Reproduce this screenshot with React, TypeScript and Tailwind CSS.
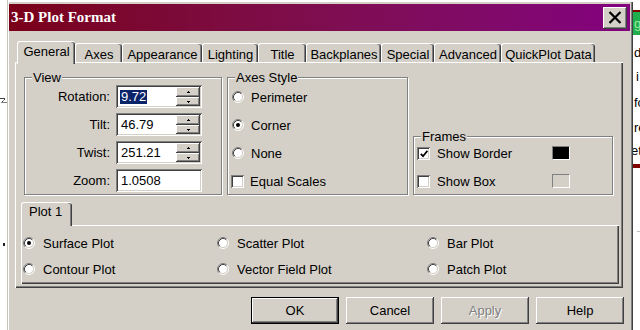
import React from "react";

const raised =
  "shadow-[inset_-1px_-1px_0_#404040,inset_1px_1px_0_#ffffff,inset_-2px_-2px_0_#808080,inset_2px_2px_0_#d4d0c8]";
const sunken =
  "shadow-[inset_1px_1px_0_#808080,inset_-1px_-1px_0_#ffffff,inset_2px_2px_0_#404040,inset_-2px_-2px_0_#d4d0c8]";

function Radio({ checked = false }: { checked?: boolean }) {
  return (
    <svg width="12" height="12" viewBox="0 0 12 12" className="shrink-0">
      <circle cx="6" cy="6" r="4.5" fill="#fff" />
      <path d="M2.11 9.89A5.5 5.5 0 0 1 9.89 2.11" stroke="#808080" fill="none" />
      <path d="M9.89 2.11A5.5 5.5 0 0 1 2.11 9.89" stroke="#fff" fill="none" />
      <path d="M2.82 9.18A4.5 4.5 0 0 1 9.18 2.82" stroke="#404040" fill="none" />
      <path d="M9.18 2.82A4.5 4.5 0 0 1 2.82 9.18" stroke="#d4d0c8" fill="none" />
      {checked && <circle cx="6" cy="6" r="2" fill="#000" />}
    </svg>
  );
}

function Check({ checked = false }: { checked?: boolean }) {
  return (
    <span className={`w-[13px] h-[13px] bg-white shrink-0 flex items-center justify-center ${sunken}`}>
      {checked && (
        <svg width="8" height="8" viewBox="0 0 8 8" className="mt-[1px]">
          <path d="M0.8 3.8 L3 6.2 L7.4 0.8" stroke="#000" strokeWidth="1.8" fill="none" />
        </svg>
      )}
    </span>
  );
}

function Arrow({ down = false }: { down?: boolean }) {
  return (
    <svg width="3" height="2" viewBox="0 0 3 2" shapeRendering="crispEdges">
      <rect x="1" y={down ? 1 : 0} width="1" height="1" />
      <rect x="0" y={down ? 0 : 1} width="3" height="1" />
    </svg>
  );
}

function Field({ value, selected = false, spin = true }: { value: string; selected?: boolean; spin?: boolean }) {
  return (
    <div className={`h-[23px] bg-white flex ${sunken}`}>
      <div className="flex-1 flex items-center pl-[4px]">
        {selected ? (
          <span className="bg-[#0a246a] text-white leading-[14px] pr-[1px] pl-[1px]">{value}</span>
        ) : (
          <span className="pl-[1px]">{value}</span>
        )}
      </div>
      {spin && (
        <div className="w-[24px] mr-[2px] my-[2px] flex flex-col">
          <div className={`h-[10px] bg-[#d4d0c8] flex items-center justify-center ${raised}`}>
            <Arrow />
          </div>
          <div className={`h-[9px] bg-[#d4d0c8] flex items-center justify-center ${raised}`}>
            <Arrow down />
          </div>
        </div>
      )}
    </div>
  );
}

function Group({ label, className, children }: { label: string; className: string; children: React.ReactNode }) {
  return (
    <div className={`relative border border-[#808080] shadow-[inset_1px_1px_0_#ffffff,1px_1px_0_#ffffff] ${className}`}>
      <span className="absolute left-[7px] -top-[8px] px-[1px] bg-[#d4d0c8] leading-[15px]">{label}</span>
      {children}
    </div>
  );
}

const tabs = [
  { name: "General", w: "w-[58px]" },
  { name: "Axes", w: "w-[47px]" },
  { name: "Appearance", w: "w-[80px]" },
  { name: "Lighting", w: "w-[56px]" },
  { name: "Title", w: "w-[48px]" },
  { name: "Backplanes", w: "w-[75px]" },
  { name: "Special", w: "w-[53px]" },
  { name: "Advanced", w: "w-[67px]" },
  { name: "QuickPlot Data", w: "w-[94px]" },
];

function Button({ label, def = false, disabled = false }: { label: string; def?: boolean; disabled?: boolean }) {
  return (
    <div
      className={`w-[88px] h-[27px] flex items-center justify-center bg-[#d4d0c8] ${raised} ${
        def ? "border border-black" : ""
      } ${disabled ? "text-[#808080] [text-shadow:1px_1px_0_#ffffff]" : ""}`}
    >
      {label}
    </div>
  );
}

export default function App() {
  return (
    <div className="w-[640px] h-[330px] bg-white flex overflow-hidden font-['Liberation_Sans',Arial,sans-serif] text-[13px] leading-[15px] text-black">
      {/* desktop behind, left */}
      <div className="w-[7px] shrink-0 flex flex-col">
        <svg width="7" height="6" viewBox="0 0 7 6" className="mt-[98px]" shapeRendering="crispEdges">
          <rect x="0" y="0" width="5" height="1" fill="#404040" />
          <rect x="4" y="1" width="1" height="1" fill="#404040" />
          <rect x="3" y="2" width="1" height="1" fill="#808080" />
          <rect x="2" y="3" width="1" height="1" fill="#404040" />
          <rect x="1" y="4" width="6" height="1" fill="#808080" />
        </svg>
        <span className="mt-[139px] ml-[3px] w-[2px] h-[3px] bg-[#202020]" />
      </div>

      {/* dialog */}
      <div className="w-[626px] shrink-0 h-full bg-[#d4d0c8] pt-[4px] pl-[2px] pr-[3px] flex flex-col shadow-[inset_1px_0_0_#c8c4bc,inset_2px_2px_0_#ffffff,inset_-1px_0_0_#404040,inset_-2px_0_0_#808080]">
        <div className="h-[27px] flex items-center pl-[2px] bg-gradient-to-r from-[#7a0018] to-[#83007f]">
          <span className="text-white font-bold text-[15px] font-['Liberation_Serif',serif]">3-D Plot Format</span>
          <div className={`ml-auto mr-[3px] w-[24px] h-[22px] bg-[#d4d0c8] flex items-center justify-center ${raised}`}>
            <svg width="14" height="13" viewBox="0 0 14 13">
              <path d="M1.5 1 L12.5 12 M12.5 1 L1.5 12" stroke="#000" strokeWidth="2.2" />
            </svg>
          </div>
        </div>

        <div className="ml-[6px] w-[608px] mt-[10px]">
          {/* tab strip */}
          <div className="h-[21px] flex items-end pl-[2px]">
            {tabs.map((t, i) =>
              i === 0 ? (
                <div
                  key={t.name}
                  className={`${t.w} h-[23px] -mb-[2px] relative z-10 bg-[#d4d0c8] rounded-t-[3px] border-t border-l border-white shadow-[inset_-1px_0_0_#404040,inset_-2px_0_0_#808080] pt-[2px] text-center`}
                >
                  {t.name}
                </div>
              ) : (
                <div
                  key={t.name}
                  className={`${t.w} h-[19px] rounded-t-[3px] border-t border-l border-white shadow-[inset_-1px_0_0_#404040,inset_-2px_0_0_#808080] pt-[3px] text-center`}
                >
                  {t.name}
                </div>
              )
            )}
          </div>

          {/* tab panel */}
          <div className="h-[226px] border-t border-l border-white shadow-[inset_-1px_-1px_0_#404040,inset_-2px_-2px_0_#808080] pt-[14px] pl-[8px]">
            <div className="flex items-start">
              <Group label="View" className="w-[198px] h-[118px]">
                <div className="grid grid-cols-[85px_86px] gap-x-[6px] gap-y-[5px] items-center pt-[7px]">
                  <span className="text-right">Rotation:</span>
                  <Field value="9.72" selected />
                  <span className="text-right">Tilt:</span>
                  <Field value="46.79" />
                  <span className="text-right">Twist:</span>
                  <Field value="251.21" />
                  <span className="text-right">Zoom:</span>
                  <Field value="1.0508" spin={false} />
                </div>
              </Group>

              <Group label="Axes Style" className="ml-[5px] w-[181px] h-[118px]">
                <div className="flex flex-col gap-[8px] pt-[9px] pl-[4px]">
                  <div className="h-[20px] flex items-center gap-[7px]">
                    <Radio />
                    <span>Perimeter</span>
                  </div>
                  <div className="h-[20px] flex items-center gap-[7px]">
                    <Radio checked />
                    <span>Corner</span>
                  </div>
                  <div className="h-[20px] flex items-center gap-[7px]">
                    <Radio />
                    <span>None</span>
                  </div>
                  <div className="h-[20px] flex items-center gap-[6px] -ml-[1px]">
                    <Check />
                    <span>Equal Scales</span>
                  </div>
                </div>
              </Group>

              <Group label="Frames" className="ml-[5px] mt-[59px] w-[200px] h-[59px]">
                <div className="flex flex-col gap-[8px] pt-[6px] pl-[3px]">
                  <div className="h-[20px] flex items-center">
                    <Check checked />
                    <span className="ml-[7px] w-[115px]">Show Border</span>
                    <span className="w-[18px] h-[14px] bg-black border border-t-[#808080] border-l-[#808080] border-b-white border-r-white" />
                  </div>
                  <div className="h-[20px] flex items-center">
                    <Check />
                    <span className="ml-[7px] w-[115px]">Show Box</span>
                    <span className="w-[18px] h-[14px] bg-[#d4d0c8] border border-t-[#808080] border-l-[#808080] border-b-white border-r-white" />
                  </div>
                </div>
              </Group>
            </div>

            {/* plot sub tabs */}
            <div className="mt-[7px] -ml-[3px]">
              <div className="h-[23px] flex items-end">
                <div className="w-[51px] h-[24px] -mb-[1px] relative z-10 bg-[#d4d0c8] rounded-t-[3px] border-t border-l border-white shadow-[inset_-1px_0_0_#404040,inset_-2px_0_0_#808080] pt-[1px] pl-[7px]">
                  Plot 1
                </div>
              </div>
              <div className="w-[598px] h-[59px] border-t border-l border-white shadow-[inset_-1px_-1px_0_#404040,inset_-2px_-2px_0_#808080] pt-[7px] pl-[1px]">
                <div className="grid grid-cols-[194px_210px_1fr] gap-y-[6px]">
                  <div className="h-[20px] flex items-center gap-[8px]">
                    <Radio checked />
                    <span>Surface Plot</span>
                  </div>
                  <div className="h-[20px] flex items-center gap-[8px]">
                    <Radio />
                    <span>Scatter Plot</span>
                  </div>
                  <div className="h-[20px] flex items-center gap-[8px]">
                    <Radio />
                    <span>Bar Plot</span>
                  </div>
                  <div className="h-[20px] flex items-center gap-[8px]">
                    <Radio />
                    <span>Contour Plot</span>
                  </div>
                  <div className="h-[20px] flex items-center gap-[8px]">
                    <Radio />
                    <span>Vector Field Plot</span>
                  </div>
                  <div className="h-[20px] flex items-center gap-[8px]">
                    <Radio />
                    <span>Patch Plot</span>
                  </div>
                </div>
              </div>
            </div>
          </div>

          {/* buttons */}
          <div className="mt-[9px] flex justify-end gap-[7px] -mr-[1px]">
            <Button label="OK" def />
            <Button label="Cancel" />
            <Button label="Apply" disabled />
            <Button label="Help" />
          </div>
        </div>
      </div>

      {/* desktop behind, right */}
      <div className="w-[7px] shrink-0 flex flex-col overflow-hidden">
        <div className="mt-[10px] h-[2px] bg-[#800000]" />
        <div className="h-[23px] bg-[#1fae4c] text-[#9fe89f] leading-[23px] pl-[1px] overflow-hidden">g</div>
        <span className="mt-[10px] pl-[1px] whitespace-nowrap">d</span>
        <span className="mt-[9px] pl-[3px] whitespace-nowrap">i</span>
        <span className="mt-[11px] pl-[1px] whitespace-nowrap">fo</span>
        <span className="mt-[10px] pl-[1px] whitespace-nowrap">re</span>
        <span className="mt-[8px] -ml-[2px] whitespace-nowrap">et</span>
        <div className="mt-[6px] h-[4px] bg-[#800000]" />
        <div className="mt-[63px] h-[1px] ml-[4px] bg-[#c0c0c0]" />
      </div>
    </div>
  );
}
